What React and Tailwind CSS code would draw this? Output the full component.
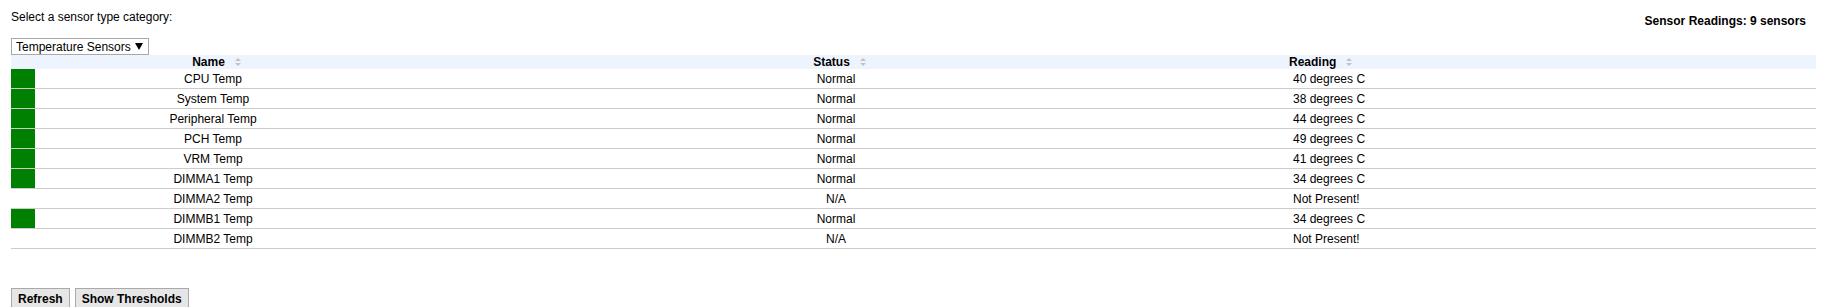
import React from 'react'

const sensors = [
  { name: 'CPU Temp', status: 'Normal', reading: '40 degrees C', ok: true },
  { name: 'System Temp', status: 'Normal', reading: '38 degrees C', ok: true },
  { name: 'Peripheral Temp', status: 'Normal', reading: '44 degrees C', ok: true },
  { name: 'PCH Temp', status: 'Normal', reading: '49 degrees C', ok: true },
  { name: 'VRM Temp', status: 'Normal', reading: '41 degrees C', ok: true },
  { name: 'DIMMA1 Temp', status: 'Normal', reading: '34 degrees C', ok: true },
  { name: 'DIMMA2 Temp', status: 'N/A', reading: 'Not Present!', ok: false },
  { name: 'DIMMB1 Temp', status: 'Normal', reading: '34 degrees C', ok: true },
  { name: 'DIMMB2 Temp', status: 'N/A', reading: 'Not Present!', ok: false },
]

function SortIcon() {
  return (
    <svg width="6" height="8" viewBox="0 0 6 8" className="shrink-0">
      <path d="M3 0 L6 3 L0 3 Z" fill="#c3c3c3" />
      <path d="M0 5 L6 5 L3 8 Z" fill="#c3c3c3" />
    </svg>
  )
}

function HeaderCell({ label, className }) {
  return (
    <div className={className}>
      <span>{label}</span>
      <span className="ml-[10px] flex items-center"><SortIcon /></span>
    </div>
  )
}

export default function App() {
  return (
    <div className="min-h-[307px] bg-white pt-[10px] pl-[11px] pr-[15px] text-[12px] leading-[14px] text-black font-['Liberation_Sans',Arial,sans-serif]">
      <div className="flex h-[14px] items-start justify-between">
        <div>Select a sensor type category:</div>
        <div className="mt-[4px] mr-[10px] font-bold">Sensor Readings: 9 sensors</div>
      </div>

      <div className="mt-[14px] flex h-[17px] w-[138px] items-center justify-between border border-[#a9a9a9] bg-white pl-[4px] pr-[5px]">
        <span>Temperature Sensors</span>
        <svg width="8" height="7" viewBox="0 0 8 7">
          <path d="M0 0 L8 0 L4 7 Z" fill="#000" />
        </svg>
      </div>

      <div>
        <div className="flex h-[14px] bg-[#eef4fd] font-bold">
          <div className="w-[24px]" />
          <HeaderCell label="Name" className="flex w-[356px] items-center justify-center pl-[7px]" />
          <HeaderCell label="Status" className="flex w-[890px] items-center justify-center pl-[7px]" />
          <HeaderCell label="Reading" className="flex flex-1 items-center pl-[8px]" />
        </div>
        {sensors.map((s) => (
          <div key={s.name} className="flex h-[20px] border-b border-[#cccccc]">
            <div className={s.ok ? 'w-[24px] bg-[#008000]' : 'w-[24px]'} />
            <div className="flex w-[356px] items-center justify-center">{s.name}</div>
            <div className="flex w-[890px] items-center justify-center">{s.status}</div>
            <div className="flex flex-1 items-center pl-[12px]">{s.reading}</div>
          </div>
        ))}
      </div>

      <div className="mt-[39px] flex gap-[5px]">
        <button type="button" className="h-[22px] border border-[#a9a9a9] bg-[#e6e6e6] px-[6px] font-bold">Refresh</button>
        <button type="button" className="h-[22px] border border-[#a9a9a9] bg-[#e6e6e6] px-[6px] font-bold">Show Thresholds</button>
      </div>
    </div>
  )
}
